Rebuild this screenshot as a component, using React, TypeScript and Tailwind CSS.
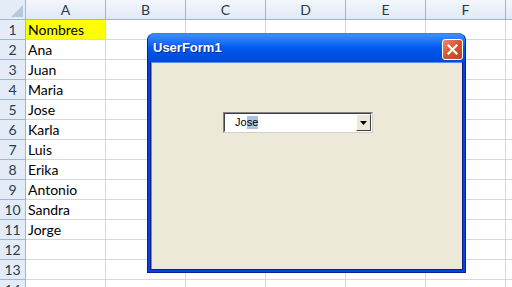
import React from "react";

const cols = ["A", "B", "C", "D", "E", "F", "G"];
const names = ["Nombres", "Ana", "Juan", "Maria", "Jose", "Karla", "Luis", "Erika", "Antonio", "Sandra", "Jorge", "", "", ""];

export default function App() {
  return (
    <div className="relative w-[512px] h-[287px] overflow-hidden bg-white" style={{ fontFamily: "Lato, 'Liberation Sans', sans-serif" }}>
      {/* header row */}
      <div className="flex h-[20px]">
        <div className="relative w-[26px] shrink-0 h-full bg-[#e4ecf7] border-r border-b border-[#9eb6ce]">
          <div className="absolute right-[2px] bottom-[2px] w-0 h-0 border-l-[12px] border-l-transparent border-b-[12px] border-b-[#b6c6dd]" />
        </div>
        {cols.map((c) => (
          <div key={c} className="w-[80px] shrink-0 h-full flex items-center justify-center text-[14px] text-[#2a3a4f] bg-gradient-to-b from-[#f3f7fc] to-[#e1e9f5] border-r border-b border-[#9eb6ce]">
            {c}
          </div>
        ))}
      </div>
      {names.map((n, i) => (
        <div key={i} className="flex h-[20px]">
          <div className="w-[26px] shrink-0 h-full flex items-center justify-center text-[14px] text-[#2a3a4f] bg-[#e4ecf7] border-r border-b border-[#9eb6ce]">
            {i + 1}
          </div>
          {cols.map((c, j) => (
            <div
              key={c}
              className={
                "w-[80px] shrink-0 h-full flex items-center pl-[2px] text-[14px] text-black border-r border-b border-[#d0d7e5] " +
                (i === 0 && j === 0 ? "bg-[#ffff00]" : "")
              }
            >
              {j === 0 ? n : ""}
            </div>
          ))}
        </div>
      ))}

      {/* UserForm window */}
      <div className="absolute left-[147px] top-[33px] w-[319px] h-[240px] rounded-t-[7px] bg-[#0842d6] border border-[#0a1f96] border-t-[#3a7bf0] flex flex-col">
        <div className="relative h-[28px] shrink-0 rounded-t-[6px] bg-gradient-to-b from-[#3d8fff] via-[#0058ee] to-[#0048d8] flex items-center pl-[5px]">
          <span className="text-white font-bold text-[13px] [text-shadow:1px_1px_0_#0a2a8c]" style={{ fontFamily: "'Liberation Sans', Arial, sans-serif" }}>
            UserForm1
          </span>
          <div className="absolute left-[294px] top-[5px] w-[21px] h-[21px] rounded-[3px] border border-white bg-gradient-to-br from-[#e98a6e] via-[#d8532f] to-[#c2411f] flex items-center justify-center">
            <svg width="11" height="11" viewBox="0 0 11 11">
              <path d="M1.5 1.5 L9.5 9.5 M9.5 1.5 L1.5 9.5" stroke="white" strokeWidth="2.2" strokeLinecap="square" />
            </svg>
          </div>
        </div>
        <div className="flex-1 mx-[2px] mb-[2px] border border-[#0a1f96] border-t-0 bg-[#0b2a9e] flex">
          <div className="flex-1 border-l border-t border-[#5a8ef0] border-b-[#9bbaf4] bg-[#ece9d8] relative">
            {/* combobox */}
            <div className="absolute left-[71px] top-[49px] w-[150px] h-[21px] bg-white border border-t-[#848284] border-l-[#848284] border-r-[#d4d0c8] border-b-[#d4d0c8] flex items-center" style={{ fontFamily: "'Liberation Sans', Arial, sans-serif" }}>
              <div className="flex-1 flex items-center pl-[10px] text-[11px] text-black h-full border border-t-[#404040] border-l-[#404040] border-r-white border-b-white">
                <span>Jo</span>
                <span className="bg-[#a8c4e4] leading-[11px] py-[1px]">se</span>
              </div>
              <div className="absolute right-[1px] top-[1px] w-[15px] h-[17px] bg-[#ece9d8] border border-t-white border-l-white border-r-[#404040] border-b-[#404040] flex items-center justify-center">
                <svg width="7" height="4" viewBox="0 0 7 4">
                  <path d="M0 0 H7 L3.5 4 Z" fill="black" />
                </svg>
              </div>
            </div>
          </div>
        </div>
      </div>
    </div>
  );
}
